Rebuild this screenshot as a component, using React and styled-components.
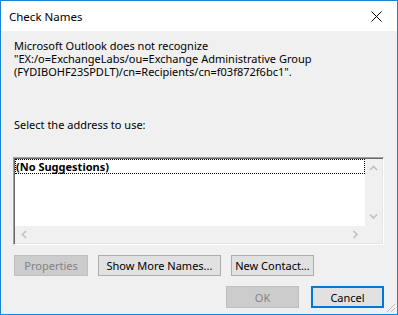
import React from "react";
import styled, { createGlobalStyle } from "styled-components";

const Global = createGlobalStyle`
  html, body { margin: 0; padding: 0; background: #ffffff; }
  body { font-family: "Segoe UI", "Noto Sans", "Liberation Sans", sans-serif; }
`;

const Window = styled.div`
  width: 398px;
  height: 315px;
  box-sizing: border-box;
  border: 1px solid #1883d7;
  display: flex;
  flex-direction: column;
  background: #f0f0f0;
  position: relative;
  overflow: hidden;
`;

const TitleBar = styled.div`
  height: 30px;
  flex: none;
  background: #ffffff;
  display: flex;
  align-items: center;
  justify-content: space-between;
  padding: 0 9px 0 8px;
  color: #000;
`;

const Title = styled.span`
  font-size: 11.5px;
  line-height: 14px;
  margin-top: 1px;
`;

const CloseBox = styled.div`
  width: 24px;
  height: 24px;
  display: flex;
  align-items: center;
  justify-content: center;
`;

const Body = styled.div`
  flex: 1;
  display: flex;
  flex-direction: column;
  padding: 8px 13px 0 13px;
  font-size: 11px;
  color: #000;
`;

const Message = styled.div`
  line-height: 13px;
  height: 39px;
`;

const Label = styled.div`
  margin-top: 40px;
  line-height: 13px;
`;

const ListBox = styled.div`
  margin-top: 26px;
  margin-left: -1px;
  height: 88px;
  box-sizing: border-box;
  border-top: 1px solid #a0a0a0;
  border-left: 1px solid #a0a0a0;
  border-right: 1px solid #ffffff;
  border-bottom: 1px solid #ffffff;
  box-shadow: inset 1px 1px 0 #696969, inset -1px -1px 0 #e3e3e3;
  padding: 1px;
  display: grid;
  grid-template-columns: 1fr 17px;
  grid-template-rows: 1fr 17px;
  background: #ffffff;
`;

const Items = styled.div`
  background: #ffffff;
`;

const Item = styled.div`
  font-weight: bold;
  line-height: 15px;
  height: 15px;
  padding-left: 1px;
  outline: 1px dotted #000;
  outline-offset: -1px;
  background: #fff;
`;

const VScroll = styled.div`
  background: #f0f0f0;
  display: flex;
  flex-direction: column;
  justify-content: space-between;
  align-items: center;
  padding: 6px 0;
`;

const HScroll = styled.div`
  background: #f0f0f0;
  display: flex;
  justify-content: space-between;
  align-items: center;
  padding: 0 6px;
`;

const Corner = styled.div`
  background: #f0f0f0;
`;

const Row = styled.div`
  display: flex;
  gap: ${(p) => p.$gap || 10}px;
  justify-content: ${(p) => (p.$right ? "flex-end" : "flex-start")};
  margin-top: ${(p) => p.$mt || 10}px;
`;

const Button = styled.div`
  box-sizing: border-box;
  width: ${(p) => p.$w}px;
  height: ${(p) => p.$h || 21}px;
  display: flex;
  align-items: center;
  justify-content: center;
  font-size: 11px;
  background: ${(p) => (p.$disabled ? "#cccccc" : "#e1e1e1")};
  color: ${(p) => (p.$disabled ? "#838383" : "#000000")};
  border: ${(p) =>
    p.$default ? "2px solid #0078d7" : p.$disabled ? "1px solid #bfbfbf" : "1px solid #adadad"};
`;

const Grip = styled.svg`
  position: absolute;
  right: 1px;
  bottom: 1px;
`;

const Chevron = ({ dir }) => {
  const paths = {
    up: "M1 5 L4.5 1.5 L8 5",
    down: "M1 1.5 L4.5 5 L8 1.5",
    left: "M5 1 L1.5 4.5 L5 8",
    right: "M1.5 1 L5 4.5 L1.5 8",
  };
  const vert = dir === "up" || dir === "down";
  return (
    <svg width={vert ? 9 : 7} height={vert ? 7 : 9} viewBox={vert ? "0 0 9 7" : "0 0 7 9"}>
      <path d={paths[dir]} fill="none" stroke="#c0c0c0" strokeWidth="1.6" />
    </svg>
  );
};

export default function App() {
  return (
    <>
      <Global />
      <Window>
        <TitleBar>
          <Title>Check Names</Title>
          <CloseBox>
            <svg width="11" height="11" viewBox="0 0 11 11">
              <path d="M0.5 0.5 L10.5 10.5 M10.5 0.5 L0.5 10.5" stroke="#000" strokeWidth="1" />
            </svg>
          </CloseBox>
        </TitleBar>
        <Body>
          <Message>
            Microsoft Outlook does not recognize
            <br />
            "EX:/o=ExchangeLabs/ou=Exchange Administrative Group
            <br />
            (FYDIBOHF23SPDLT)/cn=Recipients/cn=f03f872f6bc1".
          </Message>
          <Label>Select the address to use:</Label>
          <ListBox>
            <Items>
              <Item>(No Suggestions)</Item>
            </Items>
            <VScroll>
              <Chevron dir="up" />
              <Chevron dir="down" />
            </VScroll>
            <HScroll>
              <Chevron dir="left" />
              <Chevron dir="right" />
            </HScroll>
            <Corner />
          </ListBox>
          <Row $mt={10}>
            <Button $w={74} $disabled>Properties</Button>
            <Button $w={123}>Show More Names...</Button>
            <Button $w={83}>New Contact...</Button>
          </Row>
          <Row $right $mt={10} $gap={12}>
            <Button $w={73} $h={22} $disabled>OK</Button>
            <Button $w={73} $h={22} $default>Cancel</Button>
          </Row>
        </Body>
        <Grip width="12" height="12" viewBox="0 0 12 12">
          <path d="M11 3 L3 11 M11 7 L7 11 M11 11 L11 11" stroke="#bcbcbc" strokeWidth="1" />
        </Grip>
      </Window>
    </>
  );
}
